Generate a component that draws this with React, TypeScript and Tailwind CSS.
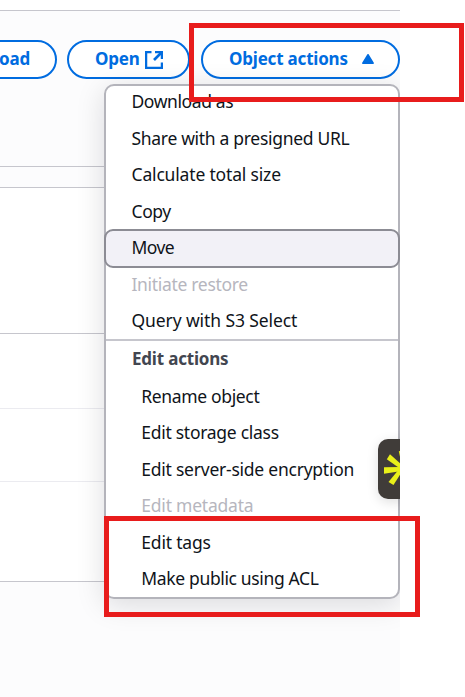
import React from "react";

type Item = { label: string; track: string; state?: "disabled" | "active" };

const general: Item[] = [
  { label: "Download as", track: "tracking-[-0.4px]" },
  { label: "Share with a presigned URL", track: "tracking-[-0.31px]" },
  { label: "Calculate total size", track: "tracking-[-0.17px]" },
  { label: "Copy", track: "tracking-[-0.4px]" },
  { label: "Move", track: "tracking-[-0.6px]", state: "active" },
  { label: "Initiate restore", track: "tracking-[-0.32px]", state: "disabled" },
  { label: "Query with S3 Select", track: "tracking-[-0.1px]" },
];

const edit: Item[] = [
  { label: "Rename object", track: "tracking-[-0.35px]" },
  { label: "Edit storage class", track: "tracking-[-0.28px]" },
  { label: "Edit server-side encryption", track: "tracking-[-0.24px]" },
  { label: "Edit metadata", track: "tracking-[-0.22px]", state: "disabled" },
  { label: "Edit tags", track: "tracking-[-0.2px]" },
  { label: "Make public using ACL", track: "tracking-[-0.35px]" },
];

function Row({ item, indent }: { item: Item; indent: string }) {
  const tone = item.state === "disabled" ? "text-[#b6b6be]" : "text-[#0f141a]";
  const box =
    item.state === "active"
      ? "-mx-[2px] -mt-[1px] -mb-[1.5px] h-[39px] rounded-[9px] border-2 border-[#8c8c94] bg-[#f2f1f7]"
      : "h-[36.5px] border-x-2 border-transparent -mx-[2px]";
  return (
    <li className={`flex shrink-0 items-center pb-[1.5px] text-[17.5px] ${box} ${indent}`}>
      <span className={`whitespace-nowrap ${tone} ${item.track}`}>{item.label}</span>
    </li>
  );
}

export default function App() {
  return (
    <div className="relative h-[697px] w-[465px] overflow-hidden bg-white font-['Noto_Sans','Open_Sans',sans-serif] text-[17px] leading-6">
      <div className="relative flex h-full w-[400px] flex-col overflow-hidden bg-[#fcfcfd]">
        <div className="h-[11px] shrink-0 border-b border-[#c6c6cd] bg-white" />
        <header className="flex h-[156px] shrink-0 items-start justify-end border-b border-[#c6c6cd] pt-[29px] font-bold text-[#006ce0]">
          <button className="mr-[10px] flex h-[39px] w-[125px] shrink-0 items-start justify-end rounded-full border-2 border-[#006ce0] bg-white pr-[25px] pt-[5px]">
            <span className="tracking-[-0.2px]">oad</span>
          </button>
          <button className="mr-[11px] flex h-[39px] w-[123px] shrink-0 items-start rounded-full border-2 border-[#006ce0] bg-white pl-[26px] pt-[5px]">
            <span className="w-[50px] text-left tracking-[-0.2px]">Open</span>
            <svg className="mt-[4px] shrink-0" width="18" height="18" viewBox="0 0 18 18" fill="none" stroke="currentColor" strokeWidth="2.3">
              <path d="M6.5 1.1H1.1v15.8h15.8v-5.4M10 1.1h6.9V8" />
              <path d="M16.5 1.5L9 9" strokeWidth="2.6" />
            </svg>
          </button>
          <button className="flex h-[39px] w-[199px] shrink-0 items-start rounded-full border-2 border-[#006ce0] bg-white pl-[26px] pt-[5px]">
            <span className="w-[132px] whitespace-nowrap text-left tracking-[-0.2px]">Object actions</span>
            <svg className="mt-[6px] shrink-0" width="14" height="12" viewBox="0 0 14 12" fill="currentColor" stroke="currentColor" strokeWidth="1.5" strokeLinejoin="round">
              <path d="M7 1.7L12.2 10.2H1.8z" />
            </svg>
          </button>
        </header>
        <div className="h-[21px] shrink-0 border-b border-[#c6c6cd]" />
        <div className="h-[146px] shrink-0 border-b border-[#c6c6cd] bg-white" />
        <div className="h-[75px] shrink-0 border-b border-[#ebebf0] bg-white" />
        <div className="h-[73px] shrink-0 border-b border-[#ebebf0] bg-white" />
        <div className="h-[100px] shrink-0 border-b border-[#c6c6cd] bg-white" />

        <div className="absolute left-[104px] top-[84px] flex h-[515px] w-[296px] flex-col rounded-[10px] border-2 border-[#b4b4bb] bg-white shadow-[0_6px_28px_1px_rgba(0,7,22,0.13)]">
          <ul className="-mt-[2.5px] flex flex-col">
            {general.map((item) => (
              <Row key={item.label} item={item} indent="pl-[25.5px]" />
            ))}
          </ul>
          <div className="h-[2px] shrink-0 bg-[#c6c6cd]" />
          <div className="flex h-[37.4px] shrink-0 items-start pl-[26px] pt-[6px] font-bold text-[#424650]">
            <span className="tracking-[-0.2px]">Edit actions</span>
          </div>
          <ul className="flex flex-col">
            {edit.map((item) => (
              <Row key={item.label} item={item} indent="pl-[35.3px]" />
            ))}
          </ul>
        </div>

        <div className="absolute left-[378px] top-[439px] h-[60px] w-[40px] rounded-[10px] bg-[#403c39] shadow-[0_3px_12px_rgba(0,0,0,0.13)]">
          <svg width="40" height="60" viewBox="0 0 40 60" fill="#e9f01a">
            <path d="M12 15.2L8.8 20.3L20.5 28.4L24 28.2V26Z" />
            <path d="M6 28.2V34.7L24 32V28Z" />
            <path d="M10.5 43L15.5 46L24 32.5V30.5L19.5 32Z" />
            <path d="M20.8 12.3L26 11L25 27L24 27Z" />
          </svg>
        </div>
      </div>
      <div className="absolute left-[189px] top-[23px] h-[79px] w-[275px] border-[5px] border-[#e81c1c]" />
      <div className="absolute left-[104px] top-[516px] h-[101px] w-[316px] border-[5px] border-[#e81c1c]" />
    </div>
  );
}
